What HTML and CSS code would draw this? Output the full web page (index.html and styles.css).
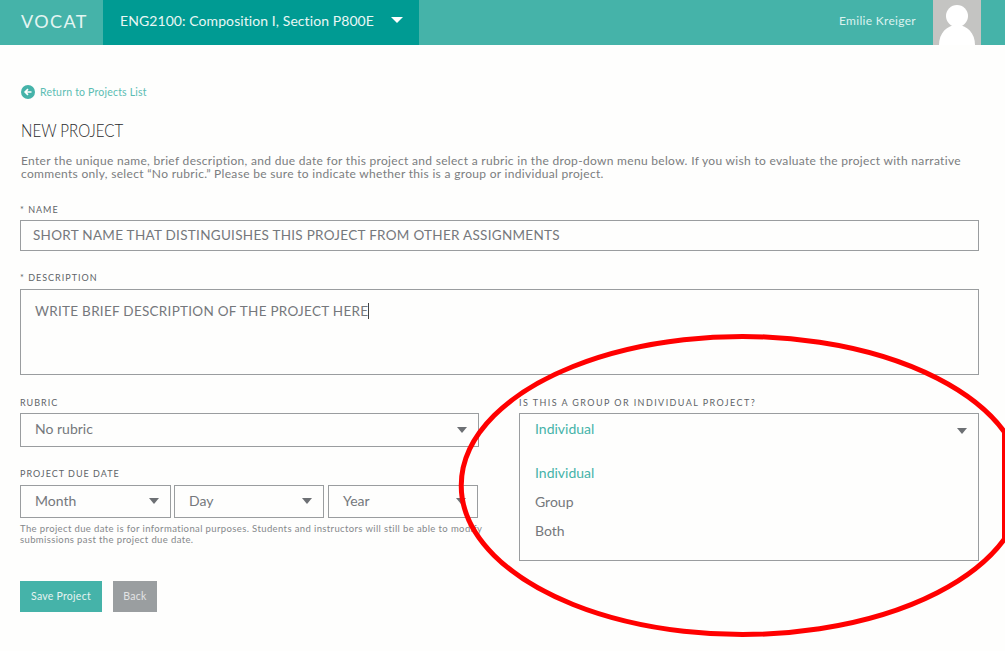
FILE: index.html
```html
<!DOCTYPE html>
<html lang="en">
<head>
<meta charset="utf-8">
<title>New Project</title>
<link rel="stylesheet" href="styles.css">
</head>
<body>
<header class="topbar">
  <div class="logo">VOCAT</div>
  <div class="course"><span>ENG2100: Composition I, Section P800E</span><i class="caret caret-white"></i></div>
  <div class="user">Emilie Kreiger</div>
  <div class="avatar">
    <svg width="48" height="45" viewBox="0 0 48 45"><circle cx="24" cy="16" r="11" fill="#fff"/><path d="M6 45C6 33 14 25 24 25S42 33 42 45Z" fill="#fff"/></svg>
  </div>
</header>
<main class="page">
  <a class="back"><svg width="14" height="14" viewBox="0 0 14 14"><circle cx="7" cy="7" r="7" fill="#45b3a9"/><path d="M10.5 7H4.5M7 4.2L4.2 7L7 9.8" fill="none" stroke="#fff" stroke-width="1.7"/></svg>Return to Projects List</a>
  <h1>NEW PROJECT</h1>
  <p class="intro">Enter the unique name, brief description, and due date for this project and select a rubric in the drop-down menu below. If you wish to evaluate the project with narrative comments only, select “No rubric.” Please be sure to indicate whether this is a group or individual project.</p>
  <label class="lbl">* NAME</label>
  <div class="box name">SHORT NAME THAT DISTINGUISHES THIS PROJECT FROM OTHER ASSIGNMENTS</div>
  <label class="lbl lbl-desc">* DESCRIPTION</label>
  <div class="box desc"><span class="typed">WRITE BRIEF DESCRIPTION OF THE PROJECT HERE</span></div>
  <div class="cols">
    <div class="col-left">
      <label class="lbl">RUBRIC</label>
      <div class="box select rubric">No rubric<i class="caret"></i></div>
      <label class="lbl lbl-date">PROJECT DUE DATE</label>
      <div class="dates">
        <div class="box select date month">Month<i class="caret"></i></div>
        <div class="box select date day">Day<i class="caret"></i></div>
        <div class="box select date year">Year<i class="caret"></i></div>
      </div>
      <p class="hint">The project due date is for informational purposes. Students and instructors will still be able to modify submissions past the project due date.</p>
      <div class="actions"><a class="btn save">Save Project</a><a class="btn backbtn">Back</a></div>
    </div>
    <div class="col-right">
      <label class="lbl lbl-wide">IS THIS A GROUP OR INDIVIDUAL PROJECT?</label>
      <div class="box open">
        <div class="open-head"><span class="sel">Individual</span><i class="caret"></i></div>
        <ul class="opts"><li class="sel">Individual</li><li>Group</li><li>Both</li></ul>
      </div>
    </div>
  </div>
</main>
<svg class="circle" width="1005" height="651" viewBox="0 0 1005 651"><path d="M1004.5 432A281 149 0 1 0 1004.5 539Z" fill="none" stroke="#ff0000" stroke-width="5"/></svg>
</body>
</html>
```
FILE: styles.css
```css
* { box-sizing: border-box; }
html, body { margin: 0; height: 651px; overflow: hidden; background: #fefefd; }
body { font-family: "Lato", "Liberation Sans", sans-serif; color: #75787c; position: relative; }
.topbar { display: flex; height: 45px; background: #45b3a9; color: #fff; align-items: stretch; }
.logo { width: 103px; padding-left: 21px; font-size: 18px; line-height: 42px; letter-spacing: 1.4px; font-weight: 400; color: #e4f5f2; }
.course { width: 316px; background: #009b93; display: flex; align-items: center; padding-left: 17px; font-size: 14px; letter-spacing: .08px; color: #e9f7f5; }
.course span { line-height: 41px; margin-top: -5px; }
.user { margin-left: auto; margin-right: 17px; font-size: 12px; line-height: 42px; letter-spacing: .3px; color: #dcf2ef; }
.avatar { width: 48px; margin-right: 24px; background: #c4c4c2; height: 45px; }
.avatar svg { display: block; }
.caret { display: block; width: 0; height: 0; border-left: 5.5px solid transparent; border-right: 5.5px solid transparent; border-top: 6px solid #6d7074; }
.caret-white { border-left-width: 6px; border-right-width: 6px; border-top-color: #fff; margin-left: 17px; margin-top: -5px; }
.page { padding: 40px 26px 0 20px; }
.back { display: flex; align-items: center; gap: 5px; margin-left: 1px; font-size: 10.5px; line-height: 14px; color: #5bbdb3; letter-spacing: .2px; }
h1 { margin: 20px 0 0 1px; font-size: 18px; line-height: 22px; font-weight: 300; color: #2a2a2c; transform-origin: left; transform: scaleX(.84); }
.intro { margin: 13px 0 0 1px; font-size: 12px; line-height: 13px; color: #7b7d80; letter-spacing: .31px; width: 950px; }
.lbl { display: block; font-size: 9px; line-height: 11px; letter-spacing: 1px; color: #606468; }
.lbl-wide { letter-spacing: 1.42px; }
.intro + .lbl { margin-top: 24px; }
.box { border: 1px solid #9a9d9f; background: #fefefd; }
.name { height: 31px; margin-top: 5px; width: 959px; padding-left: 12px; font-size: 13.5px; line-height: 29px; letter-spacing: .29px; }
.lbl-desc { margin-top: 21px; }
.desc { height: 86px; margin-top: 6px; width: 959px; padding: 13px 0 0 14px; font-size: 13.5px; line-height: 16px; letter-spacing: .28px; }
.typed { border-right: 1px solid #444; display: inline-block; }
.cols { display: flex; gap: 40px; margin-top: 22px; }
.col-left { width: 459px; flex: none; }
.col-right { width: 460px; flex: none; }
.select { display: flex; justify-content: space-between; align-items: center; padding: 0 11px 0 14px; font-size: 14px; letter-spacing: 0; }
.rubric { height: 34px; margin-top: 5px; padding-bottom: 3px; }
.rubric .caret { margin-top: 3px; }
.lbl-date { margin-top: 21px; }
.dates { display: flex; margin-top: 6px; }
.date { height: 33px; padding-bottom: 2px; }
.month { width: 151px; margin-right: 3px; }
.day { width: 150px; margin-right: 4px; }
.year { width: 150px; }
.hint { margin: 5px -10px 0 0; font-size: 9.5px; line-height: 11px; color: #85888b; letter-spacing: .38px; }
.actions { display: flex; gap: 11px; margin-top: 36px; }
.btn { display: block; height: 31px; font-size: 10.5px; line-height: 30px; text-align: center; color: #e6f4f2; letter-spacing: .25px; }
.save { width: 82px; background: #45b3a9; }
.backbtn { width: 44px; background: #9a9ea0; color: #e3e4e5; }
.open { height: 148px; margin-top: 5px; }
.open-head { display: flex; justify-content: space-between; align-items: center; height: 29px; padding: 0 11px 0 15px; font-size: 14px; }
.open-head .caret { margin-top: 4px; }
.sel { color: #45b3a9; }
.opts { list-style: none; margin: 15px 0 0; padding: 0 0 0 15px; font-size: 14px; line-height: 29px; }
.circle { position: absolute; left: 0; top: 0; pointer-events: none; }
```
